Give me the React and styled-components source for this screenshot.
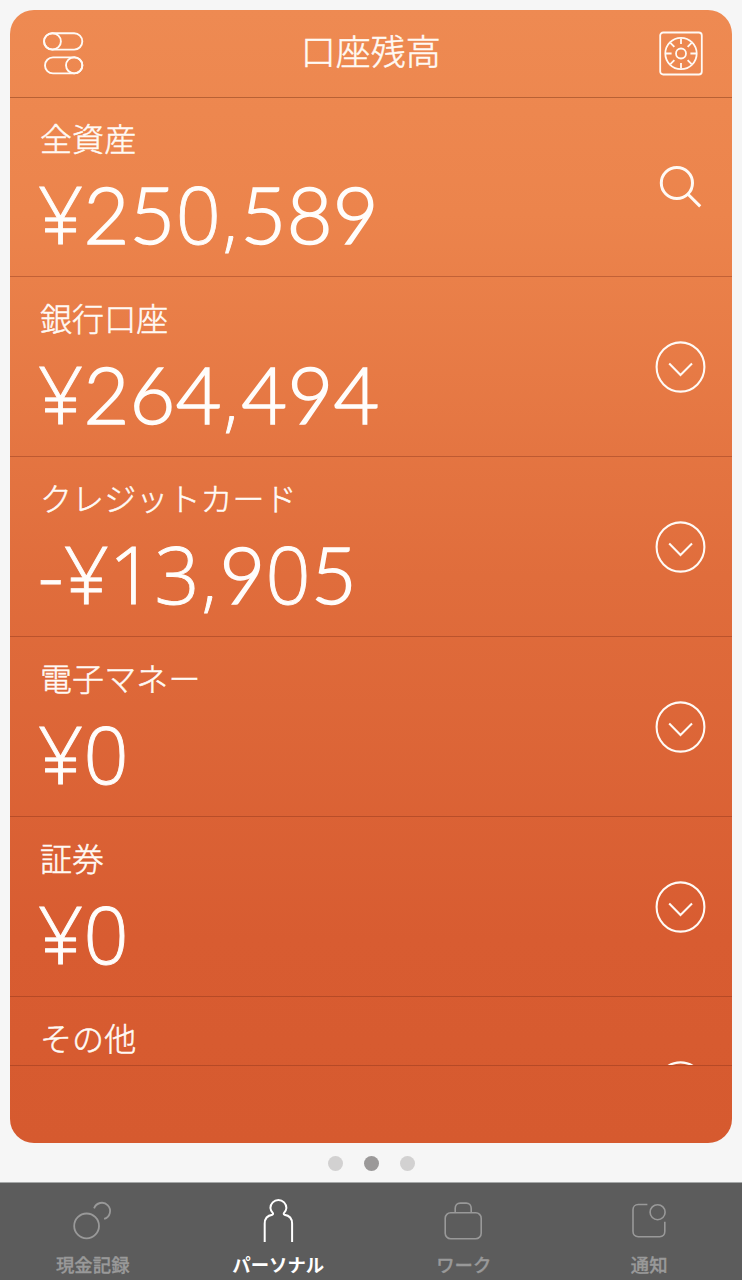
import React from "react";
import styled, { createGlobalStyle } from "styled-components";

const GlobalStyle = createGlobalStyle`
  * { box-sizing: border-box; }
  body {
    margin: 0;
    background: #f6f6f6;
    font-family: "Noto Sans CJK JP", sans-serif;
  }
`;

const Screen = styled.div`
  display: flex;
  flex-direction: column;
  width: 742px;
  height: 1280px;
  overflow: hidden;
  background: #f6f6f6;
`;

const Card = styled.main`
  display: flex;
  flex-direction: column;
  height: 1133.5px;
  margin: 10px 10px 0;
  overflow: hidden;
  border-radius: 24px;
  color: #fffaf5;
  background: linear-gradient(180deg, #ee8a52 0%, #ec844c 18%, #e06d3c 50%, #d85c31 82%, #d65a2f 100%);
`;

const Header = styled.header`
  display: flex;
  flex: none;
  align-items: flex-start;
  justify-content: space-between;
  height: 88px;
  padding: 20px 28.4px 0 30px;
  border-bottom: 1px solid rgba(120, 50, 20, 0.45);
`;

const Title = styled.h1`
  margin: -2px 0 0;
  font-size: 35px;
  font-weight: 300;
  line-height: 44px;
  -webkit-text-stroke: 0.5px currentColor;
`;

const Accounts = styled.section`
  height: 968px;
  flex: none;
  overflow: hidden;
  border-bottom: 1px solid rgba(120, 40, 20, 0.35);
`;

const Row = styled.article`
  display: flex;
  justify-content: space-between;
  height: ${(p) => (p.$first ? 179 : 180)}px;
  padding: ${(p) => (p.$first ? 19 : 20)}px 26px 0 30px;
  border-bottom: 1px solid rgba(120, 40, 20, 0.35);
`;

const Label = styled.h2`
  margin: 0;
  font-size: 32px;
  font-weight: 300;
  line-height: 40px;
  letter-spacing: 0.1px;
  -webkit-text-stroke: 0.5px currentColor;
`;

const Amount = styled.p`
  display: flex;
  align-items: baseline;
  height: 96px;
  margin: 9px 0 0 -2px;
  font-family: Lato, "Noto Sans CJK JP", sans-serif;
  font-size: 79px;
  font-weight: 300;
  line-height: 96px;
  letter-spacing: 0.3px;
  white-space: nowrap;
  color: #fffdfb;
  -webkit-text-stroke: 1.5px currentColor;
`;

const Plain = styled.span`
  font-family: "Open Sans", "Noto Sans", sans-serif;
  -webkit-text-stroke-width: 0.9px;
`;

const Comma = styled(Plain)`
  margin: 0 3px 0 2px;
  font-size: 66px;
`;

const Action = styled.div`
  flex: none;
  width: 51px;
  height: 53px;
  margin-top: 44px;
`;

const Icon = styled.svg`
  display: block;
  fill: none;
  stroke: currentColor;
  overflow: visible;
`;

const Pager = styled.div`
  display: flex;
  flex: none;
  align-items: center;
  justify-content: center;
  gap: 20.6px;
  height: 39.5px;
  padding: 2px 0 0 1px;
`;

const Dot = styled.span`
  width: 15px;
  height: 15px;
  border-radius: 50%;
  background: ${(p) => (p.$active ? "#9b9999" : "#d2d1d1")};
`;

const TabBar = styled.nav`
  display: grid;
  flex: none;
  grid-template-columns: repeat(4, 185.5px);
  height: 98px;
  border-top: 1px solid #a5a8a8;
  background: #5c5c5c;
`;

const Tab = styled.div`
  display: flex;
  flex-direction: column;
  align-items: center;
  padding-top: 13px;
  color: ${(p) => (p.$active ? "#ffffff" : "#999999")};
`;

const TabLabel = styled.span`
  margin-top: 8px;
  font-size: 18.4px;
  font-weight: ${(p) => (p.$active ? 700 : 500)};
  line-height: 24px;
  -webkit-text-stroke: ${(p) => (p.$active ? 0 : 0.3)}px currentColor;
`;

const SwitchesIcon = () => (
  <Icon width="44" height="46" viewBox="0 0 44 46" strokeWidth="1.9">
    <rect x="4" y="3.3" width="38.3" height="16.3" rx="8.15" />
    <ellipse cx="12.5" cy="11.4" rx="8.4" ry="8.1" />
    <rect x="5" y="27.4" width="37.3" height="16" rx="8" />
    <ellipse cx="34.2" cy="35.3" rx="8.2" ry="8.1" />
  </Icon>
);

const SafeIcon = () => (
  <Icon width="46" height="46" viewBox="0 0 46 46" strokeWidth="1.8">
    <rect x="2.2" y="2.5" width="41.6" height="42" rx="3" />
    <circle cx="23" cy="23.5" r="15.7" />
    <circle cx="23" cy="23.5" r="5" />
    {[0, 45, 90, 135, 180, 225, 270, 315].map((a) => (
      <path key={a} d="M23 8.5v5.6" transform={`rotate(${a} 23 23.5)`} />
    ))}
  </Icon>
);

const SearchIcon = () => (
  <Icon width="51" height="53" viewBox="0 0 51 53" strokeWidth="3">
    <circle cx="21.9" cy="22" r="15.6" />
    <path d="M33 33.2 45.2 45.4" />
  </Icon>
);

const ExpandIcon = () => (
  <Icon width="51" height="53" viewBox="0 0 51 53" strokeWidth="2.1">
    <ellipse cx="25.5" cy="26" rx="23.9" ry="24.6" />
    <path d="M14.2 22.6 25.5 34 37 22.6" />
  </Icon>
);

const CoinsIcon = () => (
  <Icon width="44" height="48" viewBox="0 0 44 48" strokeWidth="1.8">
    <circle cx="15.6" cy="29.9" r="12.4" />
    <path d="M23.1 12.4a8.2 8.2 0 1 1 10 10.5" />
  </Icon>
);

const PersonIcon = () => (
  <Icon width="44" height="48" viewBox="0 0 44 48" strokeWidth="2">
    <path d="M8.7 46V27.5c0-5 2.5-8 7.7-8.8.8-.4.8-1.1.4-1.7A8 8 0 0 1 14.4 12a8 8 0 0 1 16 0 8 8 0 0 1-2.4 5c-.4.6-.4 1.3.4 1.7 5.2.8 7.7 3.8 7.7 8.8V46" />
  </Icon>
);

const BagIcon = () => (
  <Icon width="44" height="48" viewBox="0 0 44 48" strokeWidth="1.6">
    <rect x="3.2" y="16.7" width="36" height="26" rx="5.5" />
    <path d="M13.2 16.5v-4.2c0-3 2-5.2 5-5.2h6c3 0 5 2.2 5 5.2v4.2" />
  </Icon>
);

const NoticeIcon = () => (
  <Icon width="44" height="48" viewBox="0 0 44 48" strokeWidth="1.6">
    <path d="M20.4 8.5h-9.2c-3 0-5.2 2.2-5.2 5.2v21.8c0 3 2.2 5.2 5.2 5.2h21.6c3 0 5-2.2 5-5.2V25.8" />
    <circle cx="30.6" cy="16.2" r="7.5" />
  </Icon>
);

const Money = ({ value }) => (
  <Amount>
    {value.split(/([-¥013]+|,)/).filter(Boolean).map((part, i) => {
      const Part = part === "," ? Comma : /[-¥013]/.test(part) ? Plain : "span";
      return <Part key={i}>{part}</Part>;
    })}
  </Amount>
);

const accounts = [
  { label: "全資産", amount: "¥250,589", search: true },
  { label: "銀行口座", amount: "¥264,494" },
  { label: "クレジットカード", amount: "-¥13,905" },
  { label: "電子マネー", amount: "¥0" },
  { label: "証券", amount: "¥0" },
  { label: "その他" },
];

const tabs = [
  { label: "現金記録", icon: CoinsIcon },
  { label: "パーソナル", icon: PersonIcon, active: true },
  { label: "ワーク", icon: BagIcon },
  { label: "通知", icon: NoticeIcon },
];

export default function App() {
  return (
    <>
      <GlobalStyle />
      <Screen>
        <Card>
          <Header>
            <SwitchesIcon />
            <Title>口座残高</Title>
            <SafeIcon />
          </Header>
          <Accounts>
            {accounts.map((a, i) => (
              <Row key={a.label} $first={i === 0}>
                <div>
                  <Label>{a.label}</Label>
                  {a.amount && <Money value={a.amount} />}
                </div>
                <Action>{a.search ? <SearchIcon /> : <ExpandIcon />}</Action>
              </Row>
            ))}
          </Accounts>
        </Card>
        <Pager>
          <Dot />
          <Dot $active />
          <Dot />
        </Pager>
        <TabBar>
          {tabs.map(({ label, icon: TabIcon, active }) => (
            <Tab key={label} $active={active}>
              <TabIcon />
              <TabLabel $active={active}>{label}</TabLabel>
            </Tab>
          ))}
        </TabBar>
      </Screen>
    </>
  );
}
